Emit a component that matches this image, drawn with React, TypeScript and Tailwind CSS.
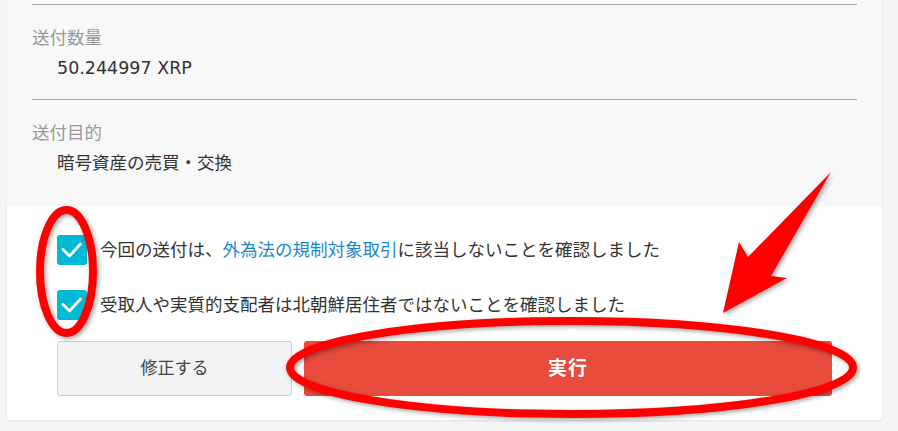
import React from 'react';

const details = [
  { label: '送付数量', value: '50.244997 XRP' },
  { label: '送付目的', value: '暗号資産の売買・交換' },
];

function CheckBox() {
  return (
    <span className="flex h-[30px] w-[30px] shrink-0 items-center justify-center rounded-[3px] bg-[#00b9d5]">
      <svg viewBox="0 0 30 30" className="h-[30px] w-[30px]" fill="none">
        <path d="M6 14.5 L12.5 21 L23.5 9" stroke="#fff" strokeWidth={2.8} strokeLinecap="round" strokeLinejoin="round" />
      </svg>
    </span>
  );
}

export default function App() {
  return (
    <div className="relative h-[431px] overflow-hidden bg-[#f4f5f7] pl-[7px] pr-[16px] font-['DejaVu_Sans','Noto_Sans_CJK_JP',sans-serif] text-[#333]">
      {/* Card */}
      <div className="overflow-hidden rounded-b-[4px] bg-white shadow-[0_1px_3px_rgba(0,0,0,0.08)]">
        {/* Summary */}
        <div className="bg-[#f8f8f8] px-[25px] pt-[4px] pb-[12px]">
          {details.map((item) => (
            <div key={item.label} className="border-t border-[#a9a9a9] pt-[20px] pb-[18px]">
              <p className="text-[17.5px] leading-[26px] text-[#999]">{item.label}</p>
              <p className="mt-[4px] pl-[25px] text-[17.5px] leading-[26px] text-[#333]">{item.value}</p>
            </div>
          ))}
        </div>

        {/* Confirmations */}
        <div className="px-[50px] pt-[29px] pb-[24px]">
          <label className="flex h-[30px] items-center gap-[13px]">
            <CheckBox />
            <span className="text-[17.5px] leading-[26px]">
              今回の送付は、<span className="text-[#1c88c9]">外為法の規制対象取引</span>に該当しないことを確認しました
            </span>
          </label>
          <label className="mt-[25px] flex h-[30px] items-center gap-[13px]">
            <CheckBox />
            <span className="text-[17.5px] leading-[26px]">受取人や実質的支配者は北朝鮮居住者ではないことを確認しました</span>
          </label>

          <div className="mt-[21px] flex gap-[12px]">
            <button className="h-[55px] w-[235px] rounded-[3px] border border-[#cfcfcf] bg-[#f2f2f2] text-[17px] text-[#444]">
              修正する
            </button>
            <button className="h-[55px] flex-1 rounded-[3px] bg-[#e74c3c] text-[19px] font-semibold tracking-[1px] text-white">
              実行
            </button>
          </div>
        </div>
      </div>

      {/* Annotation marks */}
      <svg
        className="pointer-events-none absolute left-0 top-0 h-[431px] w-[898px] drop-shadow-[2px_2px_2px_rgba(0,0,0,0.35)]"
        viewBox="0 0 898 431"
        fill="none"
      >
        <ellipse cx="66.5" cy="271.5" rx="26.5" ry="61.5" stroke="#ff0000" strokeWidth={8} />
        <ellipse cx="571.5" cy="367.5" rx="281.5" ry="46.5" stroke="#ff0000" strokeWidth={8} />
        <polygon
          points="831,172 771,276 787,278 723,313 739,242 748,257"
          fill="#ff0000"
        />
      </svg>
    </div>
  );
}
